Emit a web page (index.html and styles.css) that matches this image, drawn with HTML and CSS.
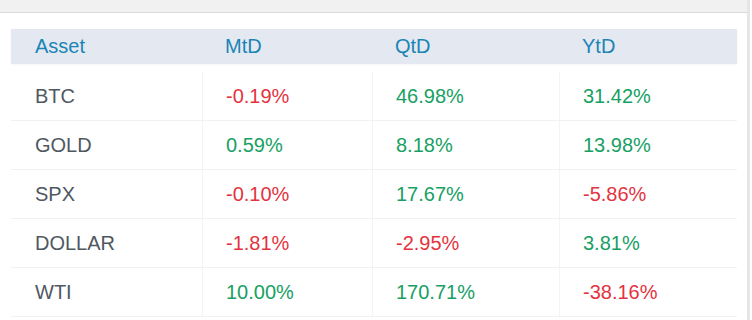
FILE: index.html
```html
<!DOCTYPE html>
<html lang="en">
<head>
  <meta charset="UTF-8">
  <title>Returns</title>
  <link rel="stylesheet" href="styles.css">
</head>
<body>
  <div class="frame">
    <div class="topbar"></div>
    <div class="perf">
      <div class="perf-head">
        <div class="cell">Asset</div>
        <div class="cell">MtD</div>
        <div class="cell">QtD</div>
        <div class="cell">YtD</div>
      </div>
      <div class="perf-row">
        <div class="cell name">BTC</div>
        <div class="cell down">-0.19%</div>
        <div class="cell up">46.98%</div>
        <div class="cell up">31.42%</div>
      </div>
      <div class="perf-row">
        <div class="cell name">GOLD</div>
        <div class="cell up">0.59%</div>
        <div class="cell up">8.18%</div>
        <div class="cell up">13.98%</div>
      </div>
      <div class="perf-row">
        <div class="cell name">SPX</div>
        <div class="cell down">-0.10%</div>
        <div class="cell up">17.67%</div>
        <div class="cell down">-5.86%</div>
      </div>
      <div class="perf-row">
        <div class="cell name">DOLLAR</div>
        <div class="cell down">-1.81%</div>
        <div class="cell down">-2.95%</div>
        <div class="cell up">3.81%</div>
      </div>
      <div class="perf-row">
        <div class="cell name">WTI</div>
        <div class="cell up">10.00%</div>
        <div class="cell up">170.71%</div>
        <div class="cell down">-38.16%</div>
      </div>
    </div>
  </div>
</body>
</html>
```

FILE: styles.css
```css
body {
  margin: 0;
  background: #fff;
  font-family: "Liberation Sans", Arial, sans-serif;
}
.frame {
  width: 750px;
  height: 320px;
  box-sizing: border-box;
  border-right: 3px solid #e6e6e6;
  overflow: hidden;
}
.topbar {
  height: 12px;
  background: #f1f1f1;
  border-bottom: 1px solid #dadada;
}
.perf {
  margin: 16px 0 0 11px;
  width: 726px;
}
.perf-head,
.perf-row {
  display: grid;
  grid-template-columns: 191px 170px 187px 178px;
}
.perf-head {
  height: 35px;
  align-items: center;
  background: #e4e9f1;
  color: #1a84b5;
  font-size: 20px;
  box-shadow: 0 1px 2px rgba(0, 0, 0, 0.04);
  margin-bottom: 8px;
}
.perf-row {
  height: 48px;
  align-items: center;
  border-bottom: 1px solid #f1f2f3;
  font-size: 20px;
}
.perf-row .cell {
  height: 100%;
  display: flex;
  align-items: center;
  border-left: 1px solid #f3f4f5;
}
.perf-row .cell:first-child {
  border-left: none;
}
.cell {
  padding-left: 23px;
}
.perf-head .cell:first-child,
.perf-row .cell:first-child {
  padding-left: 24px;
}
.name {
  color: #4f5861;
}
.up {
  color: #17a063;
}
.down {
  color: #e3333f;
}
```
